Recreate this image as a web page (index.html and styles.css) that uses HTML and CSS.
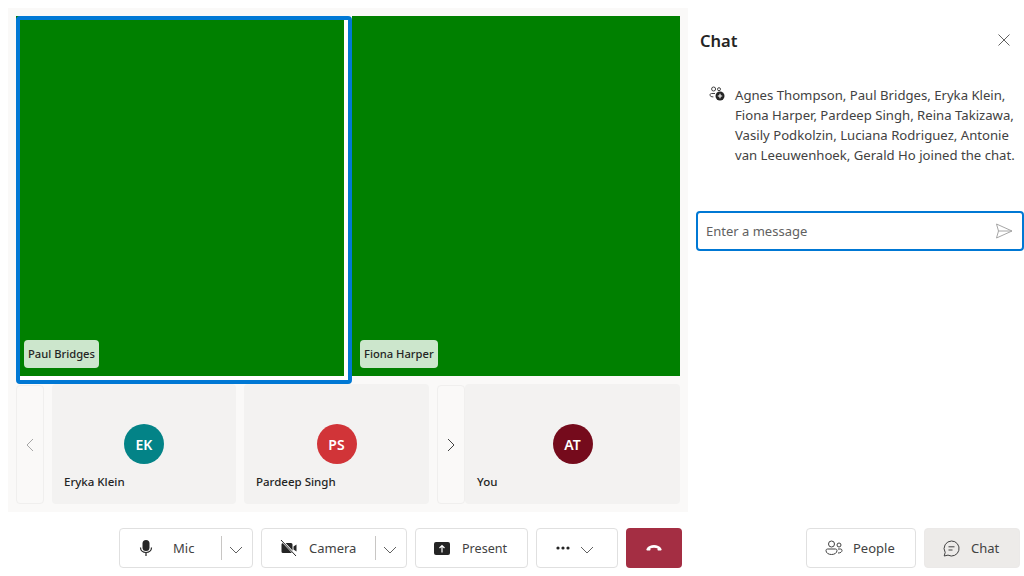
FILE: index.html
```html
<!DOCTYPE html>
<html lang="en">
<head>
    <meta charset="UTF-8">
    <title>Meeting</title>
    <link rel="stylesheet" href="styles.css">
</head>
<body>
    <div class="main">
        <div class="stage">
            <div class="video-row">
                <div class="video active"><span class="video-name">Paul Bridges</span></div>
                <div class="video"><span class="video-name">Fiona Harper</span></div>
            </div>
            <div class="strip">
                <div class="pager pager-prev">
                    <svg width="12" height="14" viewBox="0 0 12 14"><path d="M9 1 3 7l6 6" class="line light"/></svg>
                </div>
                <div class="card card-first">
                    <div class="avatar teal">EK</div>
                    <div class="card-name">Eryka Klein</div>
                </div>
                <div class="card card-second">
                    <div class="avatar red">PS</div>
                    <div class="card-name">Pardeep Singh</div>
                </div>
                <div class="pager pager-next">
                    <svg width="12" height="14" viewBox="0 0 12 14"><path d="m3 1 6 6-6 6" class="line dark"/></svg>
                </div>
                <div class="card card-you">
                    <div class="avatar maroon">AT</div>
                    <div class="card-name">You</div>
                </div>
            </div>
        </div>
        <div class="chat">
            <div class="chat-head">
                <h2>Chat</h2>
                <svg width="14" height="14" viewBox="0 0 14 14"><path d="m1.5 1.5 11 11m0-11-11 11" class="line mid"/></svg>
            </div>
            <div class="joined">
                <svg class="joined-icon" width="16" height="16" viewBox="0 0 16 16">
                    <circle cx="4.6" cy="3" r="2" class="line dark"/>
                    <circle cx="10" cy="3.2" r="1.5" class="line dark"/>
                    <path d="M6 7.5H2.6C1.6 7.5 1 8 1 9c0 1.2 1.2 1.9 3.4 1.9" class="line dark"/>
                    <circle cx="11" cy="10" r="4.5" fill="#242424"/>
                    <path d="M11 7.8v4.4M8.8 10h4.4" stroke="#fff" stroke-width="1.1" fill="none"/>
                </svg>
                <p>Agnes Thompson, Paul Bridges, Eryka Klein, Fiona Harper, Pardeep Singh, Reina Takizawa, Vasily Podkolzin, Luciana Rodriguez, Antonie van Leeuwenhoek, Gerald Ho joined the chat.</p>
            </div>
            <div class="composer">
                <input type="text" placeholder="Enter a message">
                <svg width="18" height="16" viewBox="0 0 18 16"><path d="M1.5 1 17 8 1.5 15l2-7zM3.500 8H17" fill="none" stroke="#a6a6a6" stroke-width="1"/></svg>
            </div>
        </div>
    </div>
    <div class="toolbar">
        <div class="btn btn-mic">
            <svg class="mic-icon" width="14" height="18" viewBox="0 0 14 18"><rect x="3.500" y="1" width="7" height="11" rx="3.500" fill="#242424"/><path d="M1.500 8.500C1.500 11.500 3.800 13.500 7 13.500s5.500-2 5.500-5M7 13.500V17" fill="none" stroke="#242424" stroke-width="1.200"/></svg>
            <span class="btn-label mic-label">Mic</span>
            <span class="divider"></span>
            <svg class="chev" width="14" height="8" viewBox="0 0 14 8"><path d="m1 1 6 6 6-6" class="line mid"/></svg>
        </div>
        <div class="btn btn-camera">
            <svg width="18" height="18" viewBox="0 0 18 18"><path d="M3 4h8a1.500 1.500 0 0 1 1.500 1.500v7A1.500 1.500 0 0 1 11 14H3a1.500 1.500 0 0 1-1.500-1.500v-7A1.500 1.500 0 0 1 3 4zM13.500 7.500l3-2v7l-3-2z" fill="#242424"/><path d="m1 .8 15 16" stroke="#fff" stroke-width="2.200"/><path d="m1 1 15 16" stroke="#242424" stroke-width="1"/></svg>
            <span class="btn-label">Camera</span>
            <span class="divider"></span>
            <svg class="chev" width="14" height="8" viewBox="0 0 14 8"><path d="m1 1 6 6 6-6" class="line mid"/></svg>
        </div>
        <div class="btn btn-present">
            <svg width="16" height="13" viewBox="0 0 16 13"><rect width="16" height="13" rx="2" fill="#242424"/><path d="M8 10.500V3.500M5.500 6 8 3.500 10.500 6" fill="none" stroke="#fff" stroke-width="1.200"/></svg>
            <span class="btn-label">Present</span>
        </div>
        <div class="btn btn-more">
            <svg width="14" height="4" viewBox="0 0 14 4"><circle cx="2" cy="2" r="1.600" fill="#242424"/><circle cx="7" cy="2" r="1.600" fill="#242424"/><circle cx="12" cy="2" r="1.600" fill="#242424"/></svg>
            <svg class="chev" width="14" height="8" viewBox="0 0 14 8"><path d="m1 1 6 6 6-6" class="line mid"/></svg>
        </div>
        <div class="btn btn-leave">
            <svg width="16" height="8" viewBox="0 0 16 8"><path d="M.5 5C2 2 5 1 8 1s6 1 7.500 4c.3.7 0 1.500-.7 1.500h-2.300c-.6 0-1-.4-1-1V4.300C10.500 3.900 9.300 3.700 8 3.700s-2.500.2-3.500.6v1.200c0 .6-.4 1-1 1H1.200C.5 6.500.2 5.700.5 5z" fill="#fff"/></svg>
        </div>
        <div class="btn btn-people">
            <svg width="18" height="16" viewBox="0 0 18 16"><circle cx="6.500" cy="4" r="3" class="line dark"/><circle cx="14" cy="5" r="2" class="line dark"/><path d="M2.500 9h8c.8 0 1.500.6 1.500 1.400C12 13 9.500 14.500 6.500 14.500S1 13 1 10.500C1 9.600 1.700 9 2.500 9zM13 13c2.500 0 4-1 4-2.600 0-.8-.6-1.400-1.400-1.400H13" class="line dark"/></svg>
            <span class="btn-label">People</span>
        </div>
        <div class="btn btn-chat">
            <svg width="17" height="17" viewBox="0 0 17 17"><path d="M8.500 1a7.500 7.500 0 1 1-3.500 14.100L1.200 16l1-3.600A7.500 7.500 0 0 1 8.500 1z" class="line dark"/><path d="M5.500 6.800h6M5.500 10h4" class="line dark"/></svg>
            <span class="btn-label">Chat</span>
        </div>
    </div>
</body>
</html>
```

FILE: styles.css
```css
* {
    box-sizing: border-box;
}

body {
    margin: 0;
    width: 1024px;
    height: 576px;
    overflow: hidden;
    background: #fff;
    color: #242424;
    font-family: "Noto Sans", "Open Sans", sans-serif;
    font-size: 13px;
}

.line {
    fill: none;
    stroke-width: 1;
}
.line.dark { stroke: #424242; }
.line.mid { stroke: #616161; }
.line.light { stroke: #a6a6a6; }

.main {
    display: flex;
    height: 512px;
}

/* video area */
.stage {
    width: 680px;
    height: 504px;
    margin: 8px 0 0 8px;
    padding: 8px;
    background: #faf9f8;
}

.video-row {
    display: flex;
    gap: 8px;
    height: 360px;
}

.video {
    position: relative;
    width: 328px;
    background: #008000;
}

.video.active {
    box-shadow: 4px 4px 0 #fff;
}

.video.active::after {
    content: "";
    position: absolute;
    top: 0;
    left: 0;
    right: -8px;
    bottom: -8px;
    border: 4px solid #0078d4;
    border-radius: 4px;
}

.video-name {
    position: absolute;
    left: 8px;
    bottom: 8px;
    height: 28px;
    padding: 0 4px;
    border-radius: 4px;
    background: rgba(255, 255, 255, 0.8);
    font-size: 11.2px;
    font-weight: 500;
    line-height: 28px;
}

.strip {
    display: flex;
    height: 120px;
    margin-top: 8px;
}

.pager {
    display: flex;
    align-items: center;
    justify-content: center;
    width: 28px;
    height: 119px;
    margin-top: 1px;
    border: 1px solid #f0efee;
    border-radius: 4px;
    background: #faf9f8;
}

.pager-prev svg {
    margin-left: -1px;
}

.pager-next {
    margin-left: 8px;
}

.card {
    display: flex;
    flex-direction: column;
    align-items: center;
    padding-top: 40px;
    border-radius: 4px;
    background: #f3f2f1;
}

.card-first {
    width: 184px;
    margin-left: 8px;
}

.card-second {
    width: 185px;
    margin-left: 8px;
}

.card-you {
    width: 215px;
}

.avatar {
    display: flex;
    align-items: center;
    justify-content: center;
    width: 40px;
    height: 40px;
    border-radius: 50%;
    color: #fff;
    font-size: 14px;
    font-weight: 600;
}
.avatar.teal { background: #038387; }
.avatar.red { background: #d13438; }
.avatar.maroon { background: #750b1c; }

.card-name {
    align-self: flex-start;
    margin: 8px 0 0 12px;
    font-size: 11.5px;
    font-weight: 500;
    line-height: 19px;
}

/* chat panel */
.chat {
    width: 336px;
    padding-left: 8px;
}

.chat-head {
    display: flex;
    align-items: center;
    justify-content: space-between;
    height: 24px;
    margin-top: 28px;
    padding: 0 13px 0 4px;
}

.chat-head h2 {
    margin: 0;
    font-size: 16.5px;
    font-weight: 600;
}

.joined {
    display: flex;
    gap: 10px;
    margin-top: 33px;
    padding-left: 13px;
}

.joined-icon {
    flex: none;
    margin-top: 1px;
}

.joined p {
    margin: 0;
    width: 292px;
    color: #424242;
    font-size: 13.15px;
    line-height: 20px;
}

.composer {
    display: flex;
    align-items: center;
    justify-content: space-between;
    width: 328px;
    height: 40px;
    margin-top: 46px;
    padding: 0 9px 0 8px;
    border: 2px solid #0078d4;
    border-radius: 4px;
}

.composer input {
    flex: 1;
    border: 0;
    outline: 0;
    padding: 0;
    background: none;
    font-family: inherit;
    font-size: 13px;
}

.composer input::placeholder {
    color: #616161;
    opacity: 1;
}

/* bottom bar */
.toolbar {
    display: flex;
    gap: 8px;
    height: 64px;
    padding: 16px 0 8px 119px;
}

.btn {
    display: flex;
    flex: none;
    align-items: center;
    height: 40px;
    border: 1px solid #e0e0e0;
    border-radius: 4px;
    background: #fff;
}

.btn-label {
    font-size: 13px;
    color: #424242;
}

.divider {
    width: 1px;
    height: 24px;
    background: #c8c6c4;
}

.chev {
    margin-top: 4px;
}

.btn-mic {
    width: 134px;
    padding-left: 19px;
}
.mic-label { margin-left: 20px; }
.btn-mic .divider { margin-left: 27px; }
.btn-mic .chev { margin-left: 7px; }

.btn-camera {
    width: 146px;
    padding-left: 18px;
}
.btn-camera .btn-label { margin-left: 11px; }
.btn-camera .divider { margin-left: 19px; }
.btn-camera .chev { margin-left: 7px; }

.btn-present {
    width: 113px;
    padding-left: 18px;
}
.btn-present .btn-label {
    margin-left: 12px;
    font-size: 12.6px;
}

.btn-more {
    width: 82px;
    padding-left: 19px;
}
.btn-more .chev { margin-left: 10px; }

.btn-leave {
    justify-content: center;
    width: 56px;
    border: 0;
    background: #a42e43;
}

.btn-people {
    width: 110px;
    margin-left: 116px;
    padding-left: 18px;
}
.btn-people .btn-label { margin-left: 10px; }

.btn-chat {
    width: 96px;
    padding-left: 18px;
    border-color: #ebe9e8;
    background: #edebe9;
}
.btn-chat .btn-label { margin-left: 11px; }
```
